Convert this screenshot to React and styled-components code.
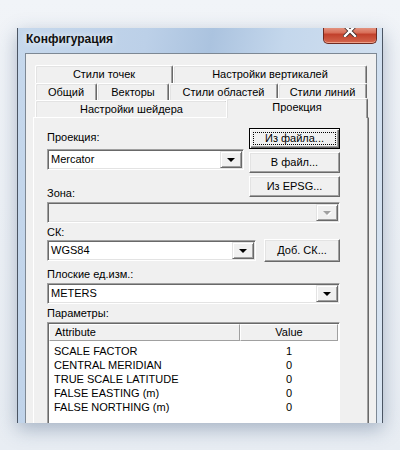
import { Fragment } from 'react';
import styled, { createGlobalStyle } from 'styled-components';

const GlobalStyle = createGlobalStyle`
  html, body {
    margin: 0;
    padding: 0;
  }
  body {
    width: 400px;
    height: 450px;
    overflow: hidden;
    background: linear-gradient(#f1f4f8, #e8edf3);
    font-family: "Liberation Sans", Arial, sans-serif;
    font-size: 11px;
    color: #000;
  }
`;

const Page = styled.div`
  width: 400px;
  height: 450px;
  box-sizing: border-box;
  padding: 28px 0 0 17px;
`;

const Window = styled.div`
  width: 366px;
  height: 395px;
  box-sizing: border-box;
  display: flex;
  flex-direction: column;
  padding: 0 5px 0 7px;
  border-left: 1px solid #4b5563;
  border-right: 1px solid #4b5563;
  background: linear-gradient(100deg, #c6d8ec 0%, #bcd0e8 30%, #abc3df 45%, #c4d7ec 62%, #d9e5f2 100%);
  box-shadow: 0 6px 18px rgba(40, 70, 110, 0.35);
  overflow: hidden;
`;

const TitleBar = styled.div`
  height: 25px;
  flex: none;
  display: flex;
  align-items: flex-start;
`;

const Title = styled.div`
  margin: 4px 0 0 1px;
  font-size: 12px;
  line-height: 14px;
  font-weight: bold;
  color: #111;
  text-shadow: 0 0 6px rgba(255, 255, 255, 0.9);
`;

const CloseButton = styled.div`
  margin: -4px 0 0 auto;
  width: 54px;
  height: 20px;
  box-sizing: border-box;
  display: flex;
  align-items: flex-start;
  justify-content: center;
  border: 1px solid #6e2b22;
  border-top: none;
  border-radius: 0 0 5px 5px;
  background: linear-gradient(#eab0a0, #d9705a 45%, #c2412c 55%, #d4674e);
  box-shadow: inset 0 -1px rgba(255, 200, 180, 0.6);

  svg {
    margin-top: 1px;
  }
`;

const Client = styled.div`
  flex: 1;
  display: flex;
  flex-direction: column;
  box-sizing: border-box;
  padding: 11px 7px 0 7px;
  background: #f0f0f0;
  border: 1px solid #7d8894;
  border-bottom: none;
`;

const TabStrip = styled.div`
  display: flex;
  flex-direction: column;
  padding-left: 2px;
`;

const TabRow = styled.div`
  display: flex;
  align-items: flex-end;
  height: ${(p) => p.$h}px;
`;

const Tab = styled.div`
  width: ${(p) => p.$w}px;
  height: ${(p) => p.$h}px;
  flex: none;
  box-sizing: border-box;
  display: flex;
  align-items: center;
  justify-content: center;
  padding-bottom: ${(p) => (p.$active ? 3 : 0)}px;
  margin-left: ${(p) => (p.$active ? -2 : 0)}px;
  margin-bottom: ${(p) => (p.$active ? -1 : 0)}px;
  position: ${(p) => (p.$active ? 'relative' : 'static')};
  z-index: ${(p) => (p.$active ? 2 : 'auto')};
  background: #f0f0f0;
  border-top: 1px solid #fff;
  border-left: 1px solid #fff;
  border-right: 1px solid #696969;
  border-radius: 2px 2px 0 0;
  box-shadow: inset -1px 0 #a0a0a0, inset 1px 1px #e3e3e3;
  line-height: 13px;
  white-space: nowrap;
`;

const Panel = styled.div`
  flex: 1;
  display: flex;
  flex-direction: column;
  box-sizing: border-box;
  padding: 0 28px 0 13px;
  border: 1px solid;
  border-color: #fff #696969 #696969 #fff;
  border-bottom: none;
  box-shadow: inset -1px 0 #a0a0a0;
  min-height: 0;
`;

const TopSection = styled.div`
  display: flex;
  justify-content: space-between;
  align-items: flex-start;
`;

const Column = styled.div`
  display: flex;
  flex-direction: column;
  width: ${(p) => p.$w}px;
  margin-top: ${(p) => p.$top || 0}px;
  gap: ${(p) => p.$gap || 0}px;
`;

const Label = styled.div`
  line-height: 13px;
  height: 13px;
  margin-top: ${(p) => p.$top || 0}px;
  white-space: nowrap;
`;

const Combo = styled.div`
  width: ${(p) => (p.$w ? `${p.$w}px` : 'auto')};
  height: 21px;
  flex: none;
  box-sizing: border-box;
  margin-top: ${(p) => p.$top || 0}px;
  display: flex;
  align-items: stretch;
  border: 1px solid;
  border-color: #a0a0a0 #fff #fff #a0a0a0;
  box-shadow: inset 1px 1px #696969, inset -1px -1px #e3e3e3;
  background: ${(p) => (p.$disabled ? '#f0f0f0' : '#fff')};
  padding: 1px;
`;

const ComboText = styled.div`
  flex: 1;
  display: flex;
  align-items: center;
  padding-left: 2px;
  line-height: 13px;
`;

const ArrowButton = styled.div`
  width: 22px;
  flex: none;
  box-sizing: border-box;
  display: flex;
  align-items: center;
  justify-content: center;
  background: #f0f0f0;
  border: 1px solid;
  border-color: #e3e3e3 #696969 #696969 #e3e3e3;
  box-shadow: inset 1px 1px #fff, inset -1px -1px #a0a0a0;
`;

const Triangle = styled.div`
  width: 0;
  height: 0;
  border-left: 4px solid transparent;
  border-right: 4px solid transparent;
  border-top: 4px solid ${(p) => (p.$disabled ? '#a0a0a0' : '#000')};
  filter: ${(p) => (p.$disabled ? 'drop-shadow(1px 1px 0 #fff)' : 'none')};
`;

const Button = styled.div`
  width: ${(p) => p.$w}px;
  height: ${(p) => p.$h || 21}px;
  flex: none;
  box-sizing: border-box;
  display: flex;
  align-items: center;
  justify-content: center;
  background: #f0f0f0;
  border: 1px solid;
  border-color: ${(p) => (p.$default ? '#000' : '#fff #696969 #696969 #fff')};
  box-shadow: ${(p) =>
    p.$default
      ? 'inset 1px 1px #fff, inset -1px -1px #696969, inset -2px -2px #a0a0a0'
      : 'inset -1px -1px #a0a0a0, inset 1px 1px #e3e3e3'};
  padding: 3px;
  line-height: 13px;
  white-space: nowrap;
`;

const FocusRing = styled.div`
  align-self: stretch;
  flex: 1;
  display: flex;
  align-items: center;
  justify-content: center;
  border: 1px dotted #000;
`;

const Row = styled.div`
  display: flex;
  justify-content: space-between;
  align-items: center;
  height: 23px;
`;

const List = styled.div`
  flex: 1;
  margin-top: 2px;
  box-sizing: border-box;
  border: 1px solid;
  border-color: #a0a0a0 #fff #fff #a0a0a0;
  box-shadow: inset 1px 1px #696969;
  border-bottom: none;
  background: #fff;
  padding: 1px 0 0 1px;
  display: flex;
  flex-direction: column;
`;

const Grid = styled.div`
  display: grid;
  grid-template-columns: 191px 98px;
`;

const HeaderCell = styled.div`
  height: 17px;
  box-sizing: border-box;
  display: flex;
  align-items: center;
  justify-content: ${(p) => (p.$center ? 'center' : 'flex-start')};
  padding-left: ${(p) => (p.$center ? 0 : 5)}px;
  background: #f0f0f0;
  border-top: 1px solid #fff;
  border-left: 1px solid #fff;
  border-right: 1px solid #a0a0a0;
  border-bottom: 1px solid #a0a0a0;
  line-height: 13px;
`;

const Body = styled.div`
  display: grid;
  grid-template-columns: 191px 98px;
  grid-auto-rows: 14px;
  padding-top: 3px;
`;

const Cell = styled.div`
  display: flex;
  align-items: center;
  justify-content: ${(p) => (p.$center ? 'center' : 'flex-start')};
  padding-left: ${(p) => (p.$center ? 0 : 5)}px;
  line-height: 13px;
  white-space: nowrap;
`;

const params = [
  ['SCALE FACTOR', '1'],
  ['CENTRAL MERIDIAN', '0'],
  ['TRUE SCALE LATITUDE', '0'],
  ['FALSE EASTING (m)', '0'],
  ['FALSE NORTHING (m)', '0'],
];

function ComboBox({ value, width, top, disabled }) {
  return (
    <Combo $w={width} $top={top} $disabled={disabled}>
      <ComboText>{value}</ComboText>
      <ArrowButton>
        <Triangle $disabled={disabled} />
      </ArrowButton>
    </Combo>
  );
}

export default function App() {
  return (
    <>
      <GlobalStyle />
      <Page>
        <Window>
          <TitleBar>
            <Title>Конфигурация</Title>
            <CloseButton>
              <svg width="14" height="12" viewBox="0 0 14 12">
                <path d="M2 1 L12 11 M12 1 L2 11" stroke="#3a2a2a" strokeWidth="4" strokeLinecap="square" />
                <path d="M2 1 L12 11 M12 1 L2 11" stroke="#fff" strokeWidth="2.4" strokeLinecap="square" />
              </svg>
            </CloseButton>
          </TitleBar>
          <Client>
            <TabStrip>
              <TabRow $h={18}>
                <Tab $w={138} $h={18}>Стили точек</Tab>
                <Tab $w={194} $h={18}>Настройки вертикалей</Tab>
              </TabRow>
              <TabRow $h={17}>
                <Tab $w={62} $h={17}>Общий</Tab>
                <Tab $w={72} $h={17}>Векторы</Tab>
                <Tab $w={109} $h={17}>Стили областей</Tab>
                <Tab $w={89} $h={17}>Стили линий</Tab>
              </TabRow>
              <TabRow $h={17}>
                <Tab $w={193} $h={17}>Настройки шейдера</Tab>
                <Tab $w={142} $h={20} $active>Проекция</Tab>
              </TabRow>
            </TabStrip>
            <Panel>
              <TopSection>
                <Column $w={197}>
                  <Label $top={13}>Проекция:</Label>
                  <ComboBox value="Mercator" top={5} />
                  <Label $top={17}>Зона:</Label>
                </Column>
                <Column $w={91} $top={10} $gap={3}>
                  <Button $w={91} $default>
                    <FocusRing>Из файла...</FocusRing>
                  </Button>
                  <Button $w={91}>В файл...</Button>
                  <Button $w={91}>Из EPSG...</Button>
                </Column>
              </TopSection>
              <ComboBox value="" top={2} disabled />
              <Label $top={3}>СК:</Label>
              <Row>
                <ComboBox value="WGS84" width={209} />
                <Button $w={76} $h={23}>Доб. СК...</Button>
              </Row>
              <Label $top={6}>Плоские ед.изм.:</Label>
              <ComboBox value="METERS" top={2} />
              <Label $top={3}>Параметры:</Label>
              <List>
                <Grid>
                  <HeaderCell>Attribute</HeaderCell>
                  <HeaderCell $center>Value</HeaderCell>
                </Grid>
                <Body>
                  {params.map(([name, value]) => (
                    <Fragment key={name}>
                      <Cell>{name}</Cell>
                      <Cell $center>{value}</Cell>
                    </Fragment>
                  ))}
                </Body>
              </List>
            </Panel>
          </Client>
        </Window>
      </Page>
    </>
  );
}
